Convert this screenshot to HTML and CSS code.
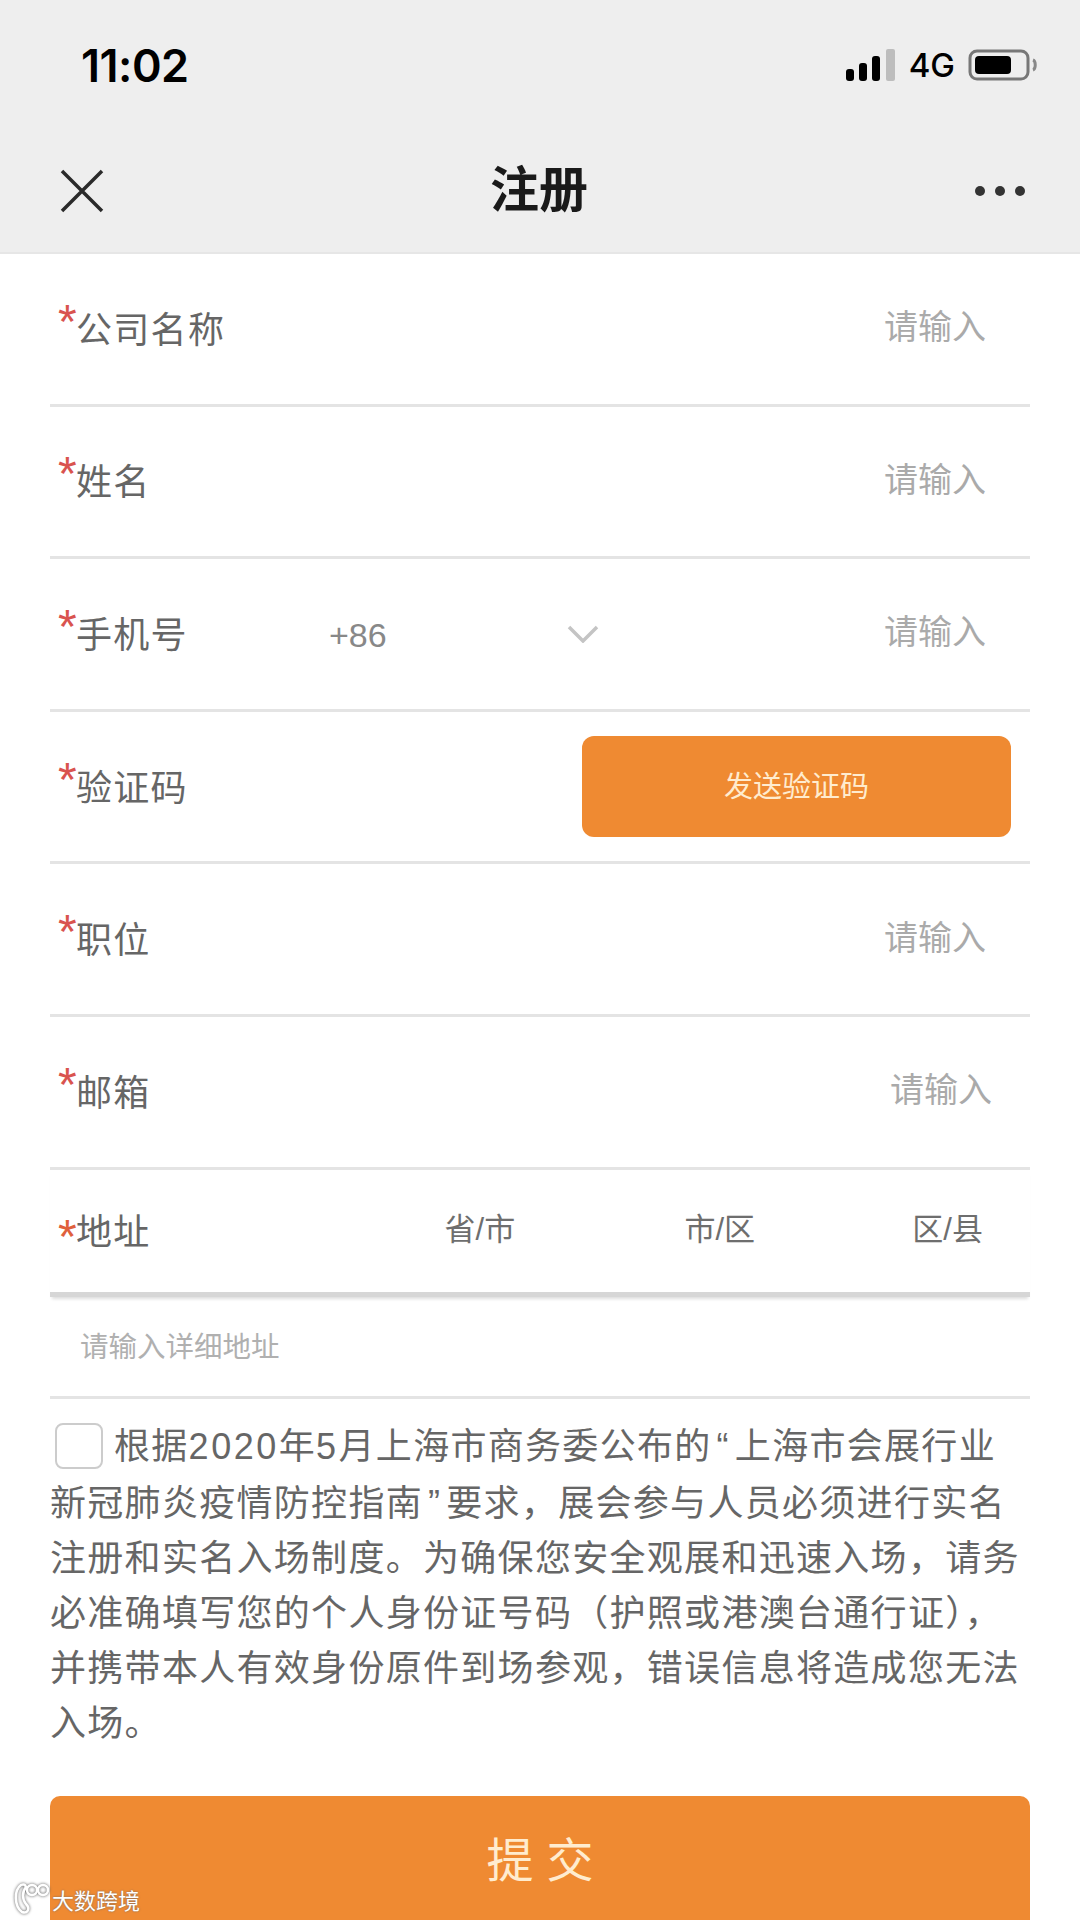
FILE: index.html
```html
<!DOCTYPE html>
<html lang="zh-CN">
<head>
    <meta charset="UTF-8">
    <meta name="viewport" content="width=device-width, initial-scale=1.0">
    <title>注册</title>
    <link rel="stylesheet" href="styles.css">
</head>
<body>

    <div class="top-bar">
        <div class="status-bar">
            <span class="time">11:02</span>
            <div class="status-icons">
                <svg class="signal" width="50" height="32" viewBox="0 0 50 32">
                    <rect x="0" y="20" width="8" height="12" rx="3" fill="#000"/>
                    <rect x="13" y="14" width="8" height="18" rx="3" fill="#000"/>
                    <rect x="26" y="7" width="8" height="25" rx="3" fill="#000"/>
                    <rect x="40" y="0" width="9" height="32" rx="2" fill="#bdbdbd"/>
                </svg>
                <span class="network">4G</span>
                <svg class="battery" width="70" height="32" viewBox="0 0 70 32">
                    <rect x="2" y="2" width="58" height="28" rx="7" fill="none" stroke="#777" stroke-width="3"/>
                    <rect x="7" y="7" width="36" height="18" rx="4" fill="#000"/>
                    <path d="M65 11c3 1 3 9 0 10" fill="none" stroke="#888" stroke-width="3"/>
                </svg>
            </div>
        </div>
        <div class="nav-bar">
            <svg class="close-icon" width="44" height="44" viewBox="0 0 44 44">
                <path d="M2 2L42 42M42 2L2 42" stroke="#2a2a2a" stroke-width="3.5" fill="none"/>
            </svg>
            <span class="nav-title">注册</span>
            <div class="more-icon"><i></i><i></i><i></i></div>
        </div>
    </div>

    <div class="form">
        <div class="row">
            <span class="label"><em>*</em>公司名称</span>
            <span class="placeholder">请输入</span>
        </div>
        <div class="row">
            <span class="label"><em>*</em>姓名</span>
            <span class="placeholder">请输入</span>
        </div>
        <div class="row">
            <span class="label phone-label"><em>*</em>手机号</span>
            <span class="area-code">+86</span>
            <svg class="chevron" width="32" height="18" viewBox="0 0 32 18">
                <path d="M2 2L16 16L30 2" stroke="#c4c4c4" stroke-width="3.5" fill="none"/>
            </svg>
            <span class="placeholder">请输入</span>
        </div>
        <div class="row">
            <span class="label"><em>*</em>验证码</span>
            <div class="send-btn"><span>发送验证码</span></div>
        </div>
        <div class="row">
            <span class="label"><em>*</em>职位</span>
            <span class="placeholder">请输入</span>
        </div>
        <div class="row">
            <span class="label"><em>*</em>邮箱</span>
            <span class="placeholder shifted">请输入</span>
        </div>
        <div class="row address-row">
            <span class="label"><em class="low">*</em>地址</span>
            <div class="region-picks">
                <span>省/市</span>
                <span>市/区</span>
                <span>区/县</span>
            </div>
        </div>
        <div class="row detail-row">
            <span class="detail-placeholder">请输入详细地址</span>
        </div>

        <div class="notice-first">
            <span class="checkbox"></span>
            <span>根据<span class="num">2020</span>年<span class="num">5</span>月上海市商务委公布的<span class="quote">“</span>上海市会展行业</span>
        </div>
        <p class="notice">新冠肺炎疫情防控指南<span class="quote">”</span>要求，展会参与人员必须进行实名<br>注册和实名入场制度。为确保您安全观展和迅速入场，请务<br>必准确填写您的个人身份证号码（护照或港澳台通行证），<br>并携带本人有效身份原件到场参观，错误信息将造成您无法<br>入场。</p>

        <div class="submit-btn">提 交</div>
    </div>

    <div class="watermark">
        <svg width="38" height="34" viewBox="0 0 38 34">
            <path d="M9 3C2 8 2 24 10 30C15 32 19 27 14 22C10 17 10 10 14 5C13 2 11 2 9 3Z" fill="none" stroke="#fff" stroke-width="2.5"/>
            <circle cx="20" cy="8" r="5" fill="none" stroke="#fff" stroke-width="2.5"/>
            <circle cx="31" cy="8" r="5" fill="none" stroke="#fff" stroke-width="2.5"/>
        </svg>
        <span>大数跨境</span>
    </div>

</body>
</html>
```

FILE: styles.css
```css
html, body {
    margin: 0;
    height: 1920px;
    overflow: hidden;
}
body {
    position: relative;
    background-color: #fff;
    font-family: "Liberation Sans", "Noto Sans CJK SC", sans-serif;
    color: #666;
}
.top-bar {
    background-color: #eee;
    height: 254px;
    border-bottom: 2px solid #e6e6e6;
    box-sizing: border-box;
}
.status-bar {
    height: 130px;
    padding: 0 42px 0 81px;
    display: flex;
    justify-content: space-between;
    align-items: center;
}
.time {
    font-family: Inter, sans-serif;
    font-weight: 600;
    font-size: 45px;
    color: #000;
    letter-spacing: -0.5px;
}
.status-icons {
    display: flex;
    align-items: center;
}
.network {
    font-family: Inter, sans-serif;
    font-size: 33px;
    font-weight: 500;
    color: #000;
    margin: 0 13px 0 13px;
}
.nav-bar {
    height: 121px;
    padding: 0 55px 0 60px;
    display: flex;
    justify-content: space-between;
    align-items: center;
    position: relative;
}
.nav-title {
    font-size: 49px;
    font-weight: 700;
    color: #1a1a1a;
    position: absolute;
    left: 0;
    right: 2px;
    top: 20px;
    text-align: center;
}
.more-icon {
    display: flex;
    gap: 10px;
}
.more-icon i {
    width: 10px;
    height: 10px;
    border-radius: 50%;
    background-color: #333;
}

.form {
    padding: 0 50px;
}
.row {
    height: 152.6px;
    box-sizing: border-box;
    border-bottom: 3px solid #e4e4e4;
    display: flex;
    align-items: center;
    padding: 0 44px 0 8px;
}
.label {
    font-size: 36px;
    letter-spacing: 1.3px;
    color: #666;
    flex-shrink: 0;
    white-space: nowrap;
    position: relative;
    top: -2px;
}
.label em {
    font-style: normal;
    color: #d9534f;
    font-size: 48px;
    display: inline-block;
    width: 18px;
    line-height: 1;
    position: relative;
    top: -5px;
}
.label em.low {
    color: #e0603c;
    top: 8px;
}
.phone-label {
    width: 271px;
}
.area-code {
    font-size: 34px;
    color: #888;
    position: relative;
    top: 2px;
}
.chevron {
    margin-left: 180px;
}
.placeholder {
    font-size: 34px;
    color: #aaa;
    margin-left: auto;
    position: relative;
    top: -4px;
}
.placeholder.shifted {
    margin-right: -6px;
}
.send-btn {
    margin-left: auto;
    margin-right: -25px;
    width: 429px;
    height: 101px;
    background-color: #ef8a32;
    border-radius: 12px;
    color: #ffeccf;
    font-size: 29px;
    display: flex;
    align-items: center;
    justify-content: center;
}
.send-btn span {
    position: relative;
    top: -3px;
}
.address-row {
    height: 127px;
    border-bottom: 5px solid #d6d6d6;
    box-shadow: 0 4px 3px -2px #ddd;
}
.region-picks {
    margin-left: 294px;
    flex: 1;
    display: flex;
    justify-content: space-between;
    font-size: 31px;
    color: #6e6e6e;
    margin-right: 3px;
    position: relative;
    top: -4px;
}
.region-picks span:nth-child(2) {
    margin-left: 12px;
}
.detail-row {
    height: 102px;
    padding-left: 30px;
}
.detail-placeholder {
    font-size: 28.5px;
    color: #b0b0b0;
    position: relative;
    top: -2px;
}
.notice-first {
    margin-top: 20px;
    font-size: 36px;
    line-height: 55px;
    letter-spacing: 1.3px;
    white-space: nowrap;
    display: flex;
    align-items: center;
}
.notice {
    margin: 2px 0 0;
    font-size: 36px;
    line-height: 55px;
    letter-spacing: 1.3px;
    color: #666;
    white-space: nowrap;
}
.num {
    letter-spacing: 2.5px;
}
.quote {
    margin: 0 5px;
}
.checkbox {
    width: 44px;
    height: 42px;
    border: 2px solid #ccc;
    border-radius: 8px;
    margin: 0 11px 0 5px;
    flex-shrink: 0;
}
.submit-btn {
    margin-top: 45px;
    height: 200px;
    background-color: #ef8a32;
    border-radius: 10px;
    color: #ffeccf;
    font-size: 47px;
    text-align: center;
    line-height: 130px;
}
.watermark {
    position: absolute;
    left: 12px;
    bottom: 4px;
    display: flex;
    align-items: center;
    gap: 2px;
    color: #fff;
    font-size: 22px;
    text-shadow: 0 0 2px #666;
}
.watermark svg {
    filter: drop-shadow(0 0 1.5px #555);
}
```
